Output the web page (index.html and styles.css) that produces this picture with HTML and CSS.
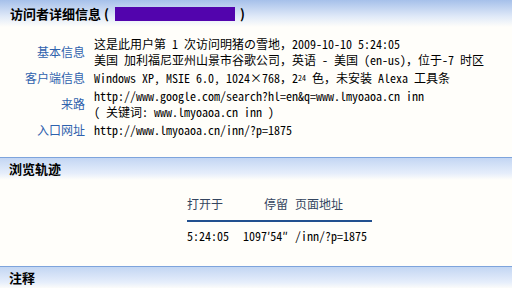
FILE: index.html
```html
<!DOCTYPE html>
<html lang="zh-CN">
<head>
    <meta charset="UTF-8">
    <title>访问者详细信息</title>
    <link rel="stylesheet" href="styles.css">
</head>
<body>
    <header class="page-head">
        <h1>访问者详细信息 (<span class="hidden-ip"></span>)</h1>
    </header>

    <table class="info">
        <tr>
            <th>基本信息</th>
            <td>这是此用户第 1 次访问明猪の雪地，2009-10-10 5:24:05<br>美国 加利福尼亚州山景市谷歌公司，英语 - 美国 (en-us)，位于-7 时区</td>
        </tr>
        <tr>
            <th>客户端信息</th>
            <td>Windows XP, MSIE 6.0, 1024×768，2<span class="pow">24</span> 色，未安装 Alexa 工具条</td>
        </tr>
        <tr>
            <th>来路</th>
            <td>http://www.google.com/search?hl=en&amp;q=www.lmyoaoa.cn inn<br>( 关键词: www.lmyoaoa.cn inn )</td>
        </tr>
        <tr>
            <th>入口网址</th>
            <td>http://www.lmyoaoa.cn/inn/?p=1875</td>
        </tr>
    </table>

    <!-- 浏览轨迹 -->
    <h2 class="sec-head">浏览轨迹</h2>
    <table class="track">
        <tr>
            <th class="c-open">打开于</th>
            <th class="c-stay">停留</th>
            <th class="c-page">页面地址</th>
        </tr>
        <tr>
            <td class="c-open">5:24:05</td>
            <td class="c-stay">1097′54″</td>
            <td class="c-page">/inn/?p=1875</td>
        </tr>
    </table>

    <h2 class="sec-head">注释</h2>
</body>
</html>
```

FILE: styles.css
```css
* {
    box-sizing: border-box;
    margin: 0;
    padding: 0;
}

body {
    font-family: "Noto Sans Mono CJK SC", "Noto Sans CJK SC", monospace;
    font-size: 12px;
    line-height: 16px;
    color: #000;
    background: #fffefa;
    overflow: hidden;
}

.page-head {
    height: 27px;
    padding-left: 10px;
    background: linear-gradient(#a6c0ea, #dfe9f8 60%, #fffefa);
}

.page-head h1 {
    font-family: "Noto Sans CJK SC", sans-serif;
    font-size: 13px;
    font-weight: bold;
    line-height: 27px;
}

.hidden-ip {
    display: inline-block;
    width: 120px;
    height: 14px;
    margin: 0 5px 0 6px;
    vertical-align: -2px;
    background: #5204ad;
}

.info {
    border-collapse: collapse;
    margin-top: 8px;
}

.info th {
    width: 85px;
    padding: 1px 0;
    text-align: right;
    font-weight: normal;
    color: #2f62ad;
    vertical-align: middle;
    white-space: nowrap;
}

.info td {
    padding: 1px 0 1px 9px;
    white-space: nowrap;
}

.pow {
    font-size: 8px;
    vertical-align: 2px;
}

.sec-head {
    margin-top: 18px;
    height: 23px;
    padding-left: 9px;
    border-top: 1px solid #7ea4dc;
    background: linear-gradient(#c3d6f3, #e6eefb 70%, #fffefa);
    font-family: "Noto Sans CJK SC", sans-serif;
    font-size: 13px;
    font-weight: bold;
    line-height: 22px;
}

.track {
    border-collapse: collapse;
    margin: 16px 0 0 187px;
}

.track th {
    padding-bottom: 8px;
    border-bottom: 2px solid #22508f;
    font-weight: normal;
    color: #34455f;
}

.track td {
    padding-top: 6px;
}

.c-open {
    width: 50px;
    text-align: left;
}

.c-stay {
    width: 51px;
    text-align: right;
}

.c-page {
    width: 84px;
    padding-left: 7px;
    text-align: left;
}

.track + .sec-head {
    margin-top: 22px;
}
```
